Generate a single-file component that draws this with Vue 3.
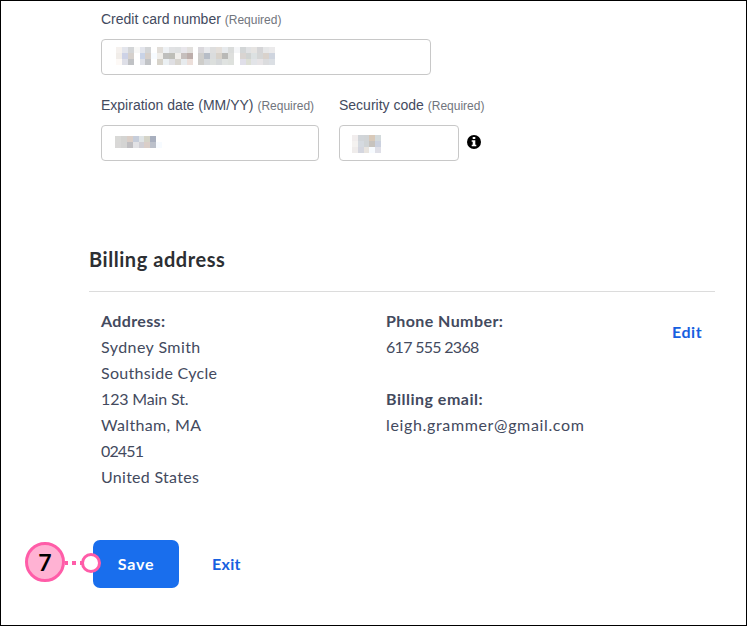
<script setup>
const cardPixels = [
  '#f5f1ee', '#e3e5ec', '#d3d5d7', '#f8f8f7', '#e3e5ec', '#d3d5d7', '#ffffff', '#e2ded9', '#eef1f4', '#e1e2e4', '#dfe1e2', '#e8e6eb', '#e2e0dd', '#ffffff', '#dad8dc', '#e8e9ec', '#dedede', '#e4dfda', '#e6e9ec', '#dadcdb', '#f5f6f8', '#d3d6d7', '#e1e2e4', '#e6e4e2', '#d5d5d7', '#e6e7e8', '#ebeaeb',
  '#f1ede9', '#cdd2e6', '#d5d0cc', '#ffffff', '#c9d3e7', '#d6cfca', '#f7fbff', '#f0eeea', '#bfbfbd', '#bebeb8', '#f0eeeb', '#c6bfbd', '#bdaeab', '#ffffff', '#cfcecc', '#b7bdc7', '#dadcdd', '#d8d2ca', '#b9b9b7', '#dedfdd', '#ffffff', '#d9d4d1', '#d0d3d2', '#dce1e2', '#d5d6d6', '#d9d2cc', '#cfd5df',
  '#fdf9f6', '#dedfe7', '#c0c2c5', '#ffffff', '#dfe1e8', '#c1c3c6', '#ffffff', '#d7d3ca', '#ebf0f3', '#dfdfe3', '#d8d5cf', '#e7ebee', '#ecdfda', '#ffffff', '#cecdca', '#d6d9dc', '#dcdfdd', '#d5d8da', '#e0e3e1', '#dee1dd', '#ffffff', '#e0dfe9', '#dddfd5', '#e2e4e8', '#e7e4e6', '#dbdcde', '#dbdfe4',
]
const expiryPixels = [
  '#d9d9d7', '#d4d4d2', '#dacec7', '#c6cdda', '#dfe4e6', '#d5d4c8', '#a8afbe', '#ffffff',
  '#d9d8d7', '#d4d4d3', '#bfbec1', '#e2e2e5', '#d0cfd5', '#dacec8', '#bbc0ca', '#f7fbff',
]
const codePixels = [
  '#f1eded', '#d1d5d9', '#d1d4d6', '#d8c9b9', '#d3dadc',
  '#f4f2f0', '#d5dae0', '#d0d4d6', '#c7c3be', '#cbd1df',
  '#efeceb', '#d4d6df', '#e8e4df', '#f7fbff', '#dfdfe7',
]
const address = ['Sydney Smith', 'Southside Cycle', '123 Main St.', 'Waltham, MA', '02451', 'United States']
</script>

<template>
  <main class="page">
    <section class="payment">
      <div class="field card">
        <label><span class="name">Credit card number</span> <span class="required">(Required)</span></label>
        <div class="input">
          <div class="mosaic card-mosaic"><i v-for="(c, i) in cardPixels" :key="i" :style="{ background: c }"></i></div>
        </div>
      </div>
      <div class="row">
        <div class="field expiry">
          <label><span class="name">Expiration date (MM/YY)</span> <span class="required">(Required)</span></label>
          <div class="input">
            <div class="mosaic expiry-mosaic"><i v-for="(c, i) in expiryPixels" :key="i" :style="{ background: c }"></i></div>
          </div>
        </div>
        <div class="field security">
          <label><span class="name">Security code</span> <span class="required">(Required)</span></label>
          <div class="code-row">
            <div class="input">
              <div class="mosaic code-mosaic"><i v-for="(c, i) in codePixels" :key="i" :style="{ background: c }"></i></div>
            </div>
            <svg class="info" width="14" height="14" viewBox="0 0 14 14">
              <circle cx="7" cy="7" r="7" fill="#000" />
              <path d="M5.7 2h2.6v2H5.7zM4.7 5.2h3.6v4.5h1v1.6H4.7V9.7h1V6.8h-1z" fill="#fff" />
            </svg>
          </div>
        </div>
      </div>
    </section>

    <section class="billing">
      <h2>Billing address</h2>
      <div class="details">
        <div class="address">
          <b>Address:</b>
          <span v-for="(line, i) in address" :key="i" :class="'line-' + i">{{ line }}</span>
        </div>
        <div class="contact">
          <b class="phone-label">Phone Number:</b>
          <span class="phone">617 555 2368</span>
          <b class="email-label">Billing email:</b>
          <span class="email">leigh.grammer@gmail.com</span>
        </div>
        <a class="edit">Edit</a>
      </div>
    </section>

    <footer class="actions">
      <div class="callout">
        <span class="number">7</span>
        <svg class="dots" width="18" height="4" viewBox="0 0 18 4"><path d="M0 0h3v4H0zM7 0h4v4H7zM15 0h3v4h-3z" fill="#ff5ca8" /></svg>
        <span class="ring"></span>
      </div>
      <button class="save">Save</button>
      <a class="exit">Exit</a>
    </footer>
  </main>
</template>

<style>
body { margin: 0; background: #fff; }
</style>

<style scoped>
* { box-sizing: border-box; }
.page {
  width: 747px;
  height: 626px;
  border: 1px solid #000;
  background: #fff;
  color: #434a5e;
  font-family: Lato, "Liberation Sans", sans-serif;
  overflow: hidden;
}
.payment { height: 238px; padding: 8px 0 0 100px; font-family: "Liberation Sans", Arial, sans-serif; }
.field label { display: block; height: 20px; line-height: 20px; font-size: 14px; white-space: nowrap; }
.required { font-size: 12px; color: #71757d; }
.input { height: 36px; margin-top: 10px; border: 1px solid #c8c8c8; border-radius: 4px; background: #fff; }
.card .input { width: 330px; padding: 7px 14px; }
.row { display: flex; gap: 20px; margin-top: 20px; }
.expiry { width: 218px; }
.expiry .input { padding: 10px 13px; }
.code-row { display: flex; align-items: center; gap: 8px; }
.security .input { width: 120px; padding: 9px 12px; }
.info { display: block; margin-top: 7px; }
.mosaic { display: grid; }
.card-mosaic { width: 159px; height: 18px; grid-template-columns: repeat(27, 1fr); grid-auto-rows: 6px; }
.expiry-mosaic { width: 47px; height: 12px; grid-template-columns: repeat(8, 1fr); grid-auto-rows: 6px; }
.code-mosaic { width: 29px; height: 18px; grid-template-columns: repeat(5, 1fr); grid-auto-rows: 6px; }
.billing { width: 714px; height: 300px; padding-left: 88px; }
h2 { margin: 0; height: 53px; padding-top: 6px; border-bottom: 1px solid #dcdcdc; color: #2d2f33; font-size: 20px; line-height: 29px; font-weight: 700; letter-spacing: 0.55px; }
.details { display: grid; grid-template-columns: 285px 286px auto; padding: 16px 0 0 12px; font-size: 16px; line-height: 26px; letter-spacing: 0.35px; }
.address, .contact { display: flex; flex-direction: column; }
.line-0 { letter-spacing: 0.43px; }
.line-1 { letter-spacing: 0.3px; }
.line-2 { letter-spacing: -0.15px; }
.line-4 { letter-spacing: -0.85px; }
.line-5 { letter-spacing: 0.28px; }
.phone { letter-spacing: -0.7px; }
.phone-label { letter-spacing: 0.42px; }
.email-label { margin-top: 26px; letter-spacing: 0.5px; }
.email { letter-spacing: 0.65px; }
.edit, .exit { color: #1660e0; font-weight: 700; }
.edit { padding-top: 11px; letter-spacing: 0.55px; }
.actions { display: flex; align-items: center; height: 50px; padding-left: 24px; }
.callout { position: relative; z-index: 1; display: flex; align-items: center; width: 68px; height: 40px; margin-top: -4px; }
.number { width: 40px; height: 40px; flex: none; border: 3px solid #ff5ca8; border-radius: 50%; background: #ffb2d3; color: #000; text-align: center; font-size: 23px; line-height: 34px; font-weight: 700; }
.dots { flex: none; margin-top: 2px; margin-right: -2px; }
.ring { width: 20px; height: 20px; flex: none; margin-top: 2px; border: 3px solid #ff5ca8; border-radius: 50%; background: #fff; }
.save { width: 86px; height: 48px; padding: 0; border: 0; border-radius: 7px; background: #196eed; color: #fff; font: 700 16px/24px Lato, sans-serif; letter-spacing: 0.8px; }
.exit { margin-left: 33px; margin-top: -2px; font-size: 16px; letter-spacing: 0.3px; }
</style>
